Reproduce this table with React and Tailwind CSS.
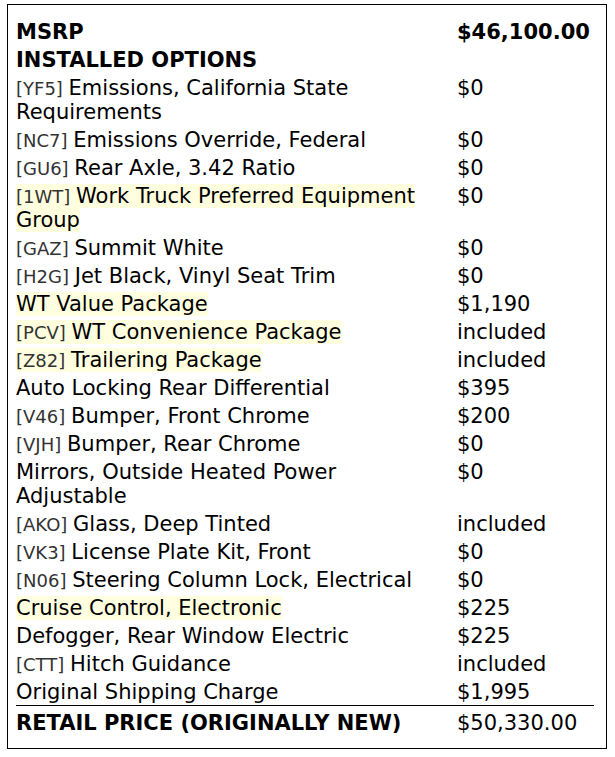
const rows = [
  { code: 'YF5', name: 'Emissions, California State Requirements', price: '$0' },
  { code: 'NC7', name: 'Emissions Override, Federal', price: '$0' },
  { code: 'GU6', name: 'Rear Axle, 3.42 Ratio', price: '$0' },
  { code: '1WT', name: 'Work Truck Preferred Equipment Group', price: '$0', hl: true },
  { code: 'GAZ', name: 'Summit White', price: '$0' },
  { code: 'H2G', name: 'Jet Black, Vinyl Seat Trim', price: '$0' },
  { name: 'WT Value Package', price: '$1,190', hl: true },
  { code: 'PCV', name: 'WT Convenience Package', price: 'included', hl: true },
  { code: 'Z82', name: 'Trailering Package', price: 'included', hl: true },
  { name: 'Auto Locking Rear Differential', price: '$395' },
  { code: 'V46', name: 'Bumper, Front Chrome', price: '$200' },
  { code: 'VJH', name: 'Bumper, Rear Chrome', price: '$0' },
  { name: 'Mirrors, Outside Heated Power Adjustable', price: '$0' },
  { code: 'AKO', name: 'Glass, Deep Tinted', price: 'included' },
  { code: 'VK3', name: 'License Plate Kit, Front', price: '$0' },
  { code: 'N06', name: 'Steering Column Lock, Electrical', price: '$0' },
  { name: 'Cruise Control, Electronic', price: '$225', hl: true },
  { name: 'Defogger, Rear Window Electric', price: '$225' },
  { code: 'CTT', name: 'Hitch Guidance', price: 'included' },
  { name: 'Original Shipping Charge', price: '$1,995' },
]

function Row({ label, price, className = 'py-[2px]', labelClass = '', priceClass = '' }) {
  return (
    <div className={`flex ${className}`}>
      <div className={`w-[441px] shrink-0 pr-[12px] ${labelClass}`}>{label}</div>
      <div className={`whitespace-nowrap ${priceClass}`}>{price}</div>
    </div>
  )
}

export default function App() {
  return (
    <div className="bg-white w-[615px] h-[757px] pt-[4px] pl-[7px]" style={{ fontFamily: '"DejaVu Sans", sans-serif' }}>
      <div className="w-[600px] h-[745px] border border-black pt-[13px] pl-[8px]">
        <div className="w-[578px] text-[21px] leading-[24px] text-black">
          <Row label="MSRP" price="$46,100.00" labelClass="font-bold" priceClass="font-bold" />
          <Row label="INSTALLED OPTIONS" labelClass="font-bold whitespace-nowrap" />
          {rows.map((r, i) => (
            <Row
              key={i}
              className={i === rows.length - 1 ? 'pt-[2px] pb-[1px] border-b border-black' : 'py-[2px]'}
              label={
                <span className={r.hl ? 'bg-[#ffffe0]' : ''}>
                  {r.code && <span className="text-[18px] leading-none text-[#333]">[{r.code}] </span>}
                  {r.name}
                </span>
              }
              price={r.price}
            />
          ))}
          <Row
            label="RETAIL PRICE (ORIGINALLY NEW)"
            price="$50,330.00"
            className="pt-[5px] pb-[2px]"
            labelClass="font-bold whitespace-nowrap"
          />
        </div>
      </div>
    </div>
  )
}
